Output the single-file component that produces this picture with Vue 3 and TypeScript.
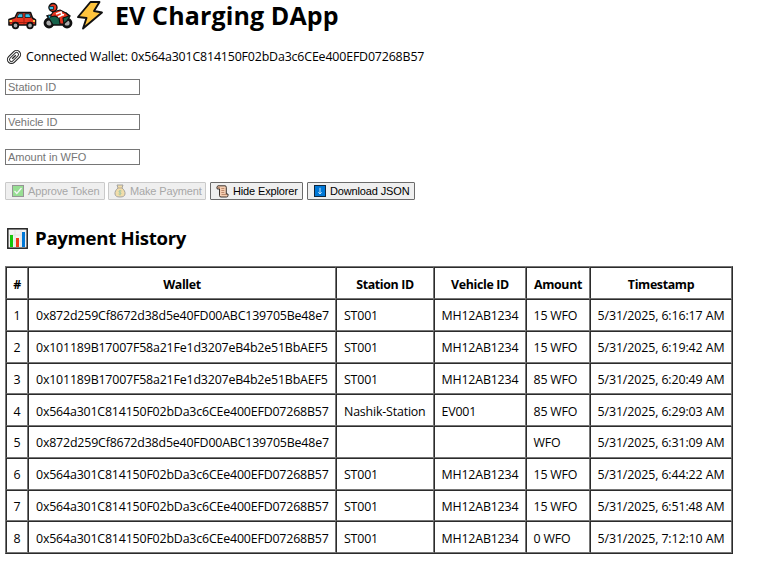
<script setup lang="ts">
interface Payment {
  wallet: string
  station: string
  vehicle: string
  amount: string
  time: string
}

const W8 = '0x872d259Cf8672d38d5e40FD00ABC139705Be48e7'
const W1 = '0x101189B17007F58a21Fe1d3207eB4b2e51BbAEF5'
const W5 = '0x564a301C814150F02bDa3c6CEe400EFD07268B57'

const payments: Payment[] = [
  { wallet: W8, station: 'ST001', vehicle: 'MH12AB1234', amount: '15', time: '5/31/2025, 6:16:17 AM' },
  { wallet: W1, station: 'ST001', vehicle: 'MH12AB1234', amount: '15', time: '5/31/2025, 6:19:42 AM' },
  { wallet: W1, station: 'ST001', vehicle: 'MH12AB1234', amount: '85', time: '5/31/2025, 6:20:49 AM' },
  { wallet: W5, station: 'Nashik-Station', vehicle: 'EV001', amount: '85', time: '5/31/2025, 6:29:03 AM' },
  { wallet: W8, station: '', vehicle: '', amount: '', time: '5/31/2025, 6:31:09 AM' },
  { wallet: W5, station: 'ST001', vehicle: 'MH12AB1234', amount: '15', time: '5/31/2025, 6:44:22 AM' },
  { wallet: W5, station: 'ST001', vehicle: 'MH12AB1234', amount: '15', time: '5/31/2025, 6:51:48 AM' },
  { wallet: W5, station: 'ST001', vehicle: 'MH12AB1234', amount: '0', time: '5/31/2025, 7:12:10 AM' },
]
</script>

<template>
  <main class="page">
    <h1 class="title">
      <svg class="car" viewBox="0 0 30 20" width="30" height="20">
        <path d="M2 15V9.500L8 7.500l2.500-5h13l2 5.500 3 2v5z" fill="#e8361f" stroke="#111" stroke-width="1.600" stroke-linejoin="round" />
        <path d="M10 7.500l1.600-3.700h4.200v3.700zM18 3.800h4.500l1.300 3.700H18z" fill="#35bfe8" stroke="#111" stroke-width=".8" />
        <path d="M3 12.500h24M17 8v6" stroke="#a51d0e" stroke-width="1" />
        <path d="M2.500 10H5v2H2.500zM26 10h2v2h-2z" fill="#ffc44d" />
        <circle cx="8.500" cy="15.500" r="2.800" fill="#aaa" stroke="#111" stroke-width="1.800" />
        <circle cx="23" cy="15.500" r="2.800" fill="#aaa" stroke="#111" stroke-width="1.800" />
      </svg>
      <svg class="bike" viewBox="0 0 30 28" width="30" height="28">
        <circle cx="6" cy="21" r="4" fill="#aaa" stroke="#111" stroke-width="2.800" />
        <circle cx="24" cy="21" r="4" fill="#aaa" stroke="#111" stroke-width="2.800" />
        <path d="M4 14l8-2 11-1 4 3-3 5-5 4h-9l-3-5z" fill="#16634b" stroke="#111" stroke-width="1.300" />
        <path d="M10 10l7-2 6 3 3 3-6 2 1 6h-4l-1-6-4-2-5 1z" fill="#e8361f" stroke="#111" stroke-width="1.200" stroke-linejoin="round" />
        <path d="M13 12l5-2 1 3-4 2M18 12l3 1" fill="none" stroke="#fff" stroke-width="1.600" />
        <path d="M5 13l3 1-2 3z" fill="#35bfe8" stroke="#111" stroke-width=".6" />
        <circle cx="10" cy="5.500" r="4" fill="#e8361f" stroke="#111" stroke-width="1.400" />
        <path d="M6 4.500h4.500v3H6.500z" fill="#35bfe8" stroke="#111" stroke-width=".7" />
      </svg>
      <svg class="bolt" viewBox="0 0 28 30" width="28" height="30">
        <path d="M14.500 2L2 17l8.500 1L7 28.500 26 12.500l-8-1.500L23.500 2z" fill="#ffc43d" stroke="#111" stroke-width="1.900" stroke-linejoin="round" />
      </svg>
      <span class="title-text">EV Charging DApp</span>
    </h1>

    <p class="wallet">
      <svg viewBox="0 0 16 16" width="16" height="16">
        <g transform="rotate(-45 8 8)" fill="none">
          <rect x=".4" y="4" width="15.200" height="8" rx="4" stroke="#222" stroke-width="1.100" />
          <rect x="2.400" y="6" width="11.200" height="4" rx="2" stroke="#333" stroke-width="1" />
          <path d="M5.500 8h5" stroke="#222" stroke-width="1.300" />
        </g>
      </svg>
      <span>Connected Wallet: {{ W5 }}</span>
    </p>

    <div class="fields">
      <input type="text" placeholder="Station ID" />
      <input type="text" placeholder="Vehicle ID" />
      <input type="text" placeholder="Amount in WFO" />
    </div>

    <div class="actions">
      <button class="approve" disabled>
        <svg viewBox="0 0 12 12" width="12" height="12">
          <rect x=".5" y=".5" width="11" height="11" fill="#16c60c" stroke="#111" />
          <path d="M2.500 6l2.300 2.500L9.500 3" fill="none" stroke="#fff" stroke-width="1.300" />
        </svg>
        <span>Approve Token</span>
      </button>
      <button class="pay" disabled>
        <svg viewBox="0 0 12 14" width="12" height="14">
          <path d="M4 4L3 1h6L8 4c2 1.500 3.400 4 3 6-.3 2-1.600 3-5 3s-4.700-1-5-3c-.4-2 1-4.500 3-6z" fill="#f5c343" stroke="#222" stroke-width=".9" />
          <path d="M3.800 4h4.400" stroke="#704b16" />
          <path d="M7.500 7C5 6 4 8 6 8.500S7 11 4.500 10M6 6v5.500" fill="none" stroke="#16863a" stroke-width=".8" />
        </svg>
        <span>Make Payment</span>
      </button>
      <button class="hide">
        <svg viewBox="0 0 13 13" width="13" height="13">
          <path d="M2 .8h7q1.300 0 1.300 1.500V9H12v1.500q0 1.500-1.500 1.500H5q-1.500 0-1.500-1.500V4H1.200Q.2 1.200 2 .8z" fill="#f5ceb2" stroke="#29211e" stroke-width=".9" stroke-linejoin="round" />
          <path d="M2 2.500h1.500V4M5.300 3.500h3M5.300 5.500h3M5.300 7.500h3M5.500 9.500H11" fill="none" stroke="#a66e50" stroke-width=".7" />
        </svg>
        <span>Hide Explorer</span>
      </button>
      <button class="download">
        <svg viewBox="0 0 12 12" width="12" height="12">
          <rect x=".5" y=".5" width="11" height="11" fill="#0078d7" stroke="#10263b" />
          <path d="M6 2.800v6M4.300 7.300L6 9l1.700-1.700" fill="none" stroke="#d8efff" stroke-width=".9" />
        </svg>
        <span>Download JSON</span>
      </button>
    </div>

    <h2 class="subtitle">
      <svg viewBox="0 0 21 21" width="21" height="21">
        <rect x=".8" y=".8" width="19.400" height="19.400" fill="#f2f2f2" stroke="#222" stroke-width="1.500" />
        <path d="M2 7h17M2 13h17M8 2v17M14 2v17" stroke="#ddd" stroke-width=".7" />
        <path d="M3 7h3v12H3z" fill="#16c60c" />
        <path d="M9 10h3v9H9z" fill="#f03a17" />
        <path d="M15 4h3v15h-3z" fill="#0078d7" />
      </svg>
      <span>Payment History</span>
    </h2>

    <table class="history">
      <colgroup>
        <col class="c-num" /><col class="c-wallet" /><col class="c-station" />
        <col class="c-vehicle" /><col class="c-amount" /><col class="c-time" />
      </colgroup>
      <thead>
        <tr>
          <th>#</th><th>Wallet</th><th>Station ID</th><th>Vehicle ID</th><th>Amount</th><th>Timestamp</th>
        </tr>
      </thead>
      <tbody>
        <tr v-for="(p, i) in payments" :key="i">
          <td>{{ i + 1 }}</td>
          <td class="addr">{{ p.wallet }}</td>
          <td class="station">{{ p.station }}</td>
          <td>{{ p.vehicle }}</td>
          <td>{{ p.amount }} WFO</td>
          <td class="time">{{ p.time }}</td>
        </tr>
      </tbody>
    </table>
  </main>
</template>

<style>
body {
  background: #fff;
}
</style>

<style scoped>
.page {
  box-sizing: border-box;
  width: 771px;
  height: 579px;
  padding-left: 5px;
  overflow: hidden;
  color: #000;
  font-family: "Open Sans", "Noto Sans", sans-serif;
  font-size: 12.4px;
}
svg {
  display: block;
  flex: none;
}
.title {
  display: flex;
  height: 32px;
  margin: 0;
  padding-left: 2px;
  font-size: 25px;
  line-height: 30px;
  white-space: nowrap;
}
.car { margin-top: 10px; }
.bike { margin: 2px 0 0 6px; }
.bolt { margin: 0 0 0 3px; }
.title-text { margin-left: 11px; letter-spacing: 0.12px; }
.wallet {
  display: flex;
  align-items: center;
  height: 18px;
  margin: 16px 0 0;
  padding-left: 1px;
  gap: 4px;
  line-height: 18px;
  letter-spacing: -0.165px;
  white-space: nowrap;
}
.fields {
  display: flex;
  flex-direction: column;
  gap: 19px;
  margin-top: 13px;
}
input {
  box-sizing: border-box;
  width: 135px;
  height: 16px;
  margin: 0;
  padding: 0 2px;
  border: 1px solid #767676;
  border-radius: 0;
  background: #fff;
  font: 11px "Liberation Sans", Arial, sans-serif;
}
input::placeholder { color: #757575; }
.actions {
  display: flex;
  gap: 4px;
  margin-top: 17px;
}
button {
  box-sizing: border-box;
  display: flex;
  align-items: center;
  height: 18px;
  margin: 0;
  padding: 0 0 0 6px;
  gap: 4px;
  border: 1px solid #6b6b6b;
  border-radius: 1px;
  background: #efefef;
  color: #000;
  font: 11px "Liberation Sans", Arial, sans-serif;
  letter-spacing: -0.14px;
  white-space: nowrap;
}
button:disabled { border-color: #cacaca; color: #a7a7a7; }
button:disabled svg { opacity: 0.4; }
.approve { width: 100px; margin-right: -1px; }
.pay { width: 98px; padding-left: 5px; }
.hide { width: 93px; padding-left: 5px; }
.download { width: 108px; }
.subtitle {
  display: flex;
  align-items: center;
  height: 26px;
  margin: 25px 0 0;
  padding-left: 2px;
  gap: 7px;
  font-size: 18.6px;
  line-height: 26px;
  letter-spacing: -0.3px;
}
.history {
  width: 728px;
  margin-top: 15px;
  border-collapse: separate;
  border-spacing: 0;
  border: 1px solid;
  border-color: #767676 #2b2b2b #2b2b2b #767676;
  table-layout: fixed;
}
.c-num { width: 22px; }
.c-wallet { width: 308px; }
.c-station { width: 98px; }
.c-vehicle { width: 92px; }
.c-amount { width: 64px; }
.c-time { width: 142px; }
th, td {
  box-sizing: border-box;
  height: 32px;
  padding: 1px 0 0 6.5px;
  border: 1px solid;
  border-color: #2b2b2b #767676 #767676 #2b2b2b;
  line-height: 18px;
  letter-spacing: -0.18px;
  text-align: left;
  white-space: nowrap;
}
td.addr, td.station { padding-left: 7px; }
td.time { letter-spacing: -0.11px; }
tr:nth-child(4n + 3) td { height: 31px; padding-top: 2px; }
tbody tr:nth-child(4n) td { padding-top: 3px; }
th { padding: 3px 0 0; letter-spacing: -0.35px; text-align: center; }
</style>
